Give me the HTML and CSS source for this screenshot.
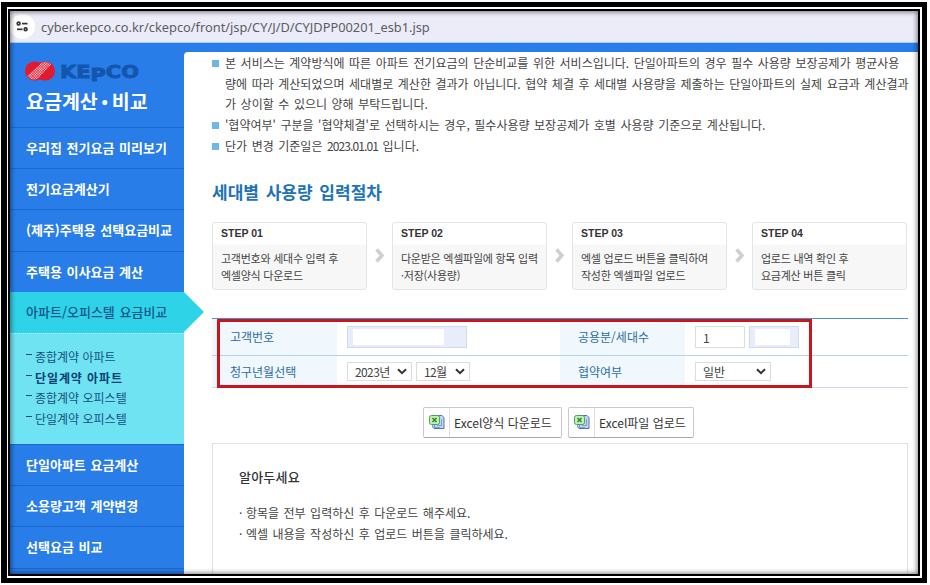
FILE: index.html
```html
<!DOCTYPE html>
<html lang="ko">
<head>
    <meta charset="UTF-8">
    <meta name="viewport" content="width=device-width, initial-scale=1.0">
    <title>요금계산 · 비교</title>
    <link rel="stylesheet" href="styles.css">
</head>
<body>
    <div class="frame">
    <div class="frame-line">
    <div class="window">
        <div class="address-bar">
            <span class="site-info">
                <svg width="13" height="11" viewBox="0 0 13 11" fill="none" stroke="#333" stroke-width="1.7">
                    <circle cx="2.6" cy="2.6" r="1.4"/><path d="M6 2.6h5.5"/>
                    <circle cx="9.6" cy="8.3" r="1.4"/><path d="M1 8.3h5.5"/>
                </svg>
            </span>
            <span class="url">cyber.kepco.co.kr/ckepco/front/jsp/CY/J/D/CYJDPP00201_esb1.jsp</span>
        </div>
        <div class="page">
            <div class="sidebar">
                <div class="brand">
                    <svg class="logo" width="118" height="24" viewBox="0 0 118 24">
                        <defs>
                            <pattern id="dots" width="1.8" height="1.8" patternUnits="userSpaceOnUse" patternTransform="rotate(45)">
                                <rect width="1.1" height="1.1" fill="#fff"/>
                            </pattern>
                        </defs>
                        <rect x="1" y="1.500" width="20" height="19" rx="9.500" fill="#e2192f"/>
                        <rect x="11" y="1.500" width="20" height="19" rx="9.500" fill="#e2192f"/>
                        <path d="M3 16L18 2.500q6-2 9 2L14 18.500q-6 3-11-2.500z" fill="url(#dots)"/>
                        <text x="36" y="18" textLength="79" lengthAdjust="spacingAndGlyphs">KE<tspan dy="3">P</tspan><tspan dy="-3">C</tspan>O</text>
                    </svg>
                    <div class="brand-title">요금계산<span>•</span>비교</div>
                </div>
                <ul class="menu">
                    <li>우리집 전기요금 미리보기</li>
                    <li>전기요금계산기</li>
                    <li>(제주)주택용 선택요금비교</li>
                    <li>주택용 이사요금 계산</li>
                    <li class="active">아파트/오피스텔 요금비교</li>
                </ul>
                <ul class="submenu">
                    <li>종합계약 아파트</li>
                    <li class="current">단일계약 아파트</li>
                    <li>종합계약 오피스텔</li>
                    <li>단일계약 오피스텔</li>
                </ul>
                <ul class="menu">
                    <li>단일아파트 요금계산</li>
                    <li>소용량고객 계약변경</li>
                    <li>선택요금 비교</li>
                    <li></li>
                </ul>
            </div>
            <div class="content">
                <ul class="notice">
                    <li>본 서비스는 계약방식에 따른 아파트 전기요금의 단순비교를 위한 서비스입니다. 단일아파트의 경우 필수 사용량 보장공제가 평균사용<br>량에 따라 계산되었으며 세대별로 계산한 결과가 아닙니다. 협약 체결 후 세대별 사용량을 제출하는 단일아파트의 실제 요금과 계산결과<br>가 상이할 수 있으니 양해 부탁드립니다.</li>
                    <li>'협약여부' 구분을 '협약체결'로 선택하시는 경우, 필수사용량 보장공제가 호별 사용량 기준으로 계산됩니다.</li>
                    <li>단가 변경 기준일은 <span class="date">2023.01.01</span> 입니다.</li>
                </ul>
                <h1>세대별 사용량 입력절차</h1>
                <div class="steps">
                    <div class="step">
                        <h2>STEP 01</h2>
                        <p>고객번호와 세대수 입력 후<br>엑셀양식 다운로드</p>
                    </div>
                    <svg class="arrow" width="10" height="15" viewBox="0 0 10 15"><path d="M1.5 1.5L7 7.5l-5.5 6"/></svg>
                    <div class="step">
                        <h2>STEP 02</h2>
                        <p>다운받은 엑셀파일에 항목 입력<br>·저장(사용량)</p>
                    </div>
                    <svg class="arrow" width="10" height="15" viewBox="0 0 10 15"><path d="M1.5 1.5L7 7.5l-5.5 6"/></svg>
                    <div class="step">
                        <h2>STEP 03</h2>
                        <p>엑셀 업로드 버튼을 클릭하여<br>작성한 엑셀파일 업로드</p>
                    </div>
                    <svg class="arrow" width="10" height="15" viewBox="0 0 10 15"><path d="M1.5 1.5L7 7.5l-5.5 6"/></svg>
                    <div class="step">
                        <h2>STEP 04</h2>
                        <p>업로드 내역 확인 후<br>요금계산 버튼 클릭</p>
                    </div>
                </div>
                <div class="form">
                    <div class="row">
                        <label>고객번호</label>
                        <div class="field"><div class="box filled customer"><i></i></div></div>
                        <label>공용분/세대수</label>
                        <div class="field"><div class="box">1</div><div class="box filled"><i></i></div></div>
                    </div>
                    <div class="row">
                        <label>청구년월선택</label>
                        <div class="field">
                            <div class="select year">2023년<svg width="10" height="7" viewBox="0 0 10 7"><path d="M1 1.2l4 4 4-4"/></svg></div>
                            <div class="select month">12월<svg width="10" height="7" viewBox="0 0 10 7"><path d="M1 1.2l4 4 4-4"/></svg></div>
                        </div>
                        <label>협약여부</label>
                        <div class="field">
                            <div class="select type">일반<svg width="10" height="7" viewBox="0 0 10 7"><path d="M1 1.2l4 4 4-4"/></svg></div>
                        </div>
                    </div>
                    <div class="highlight"></div>
                </div>
                <div class="buttons">
                    <div class="btn download">
                        <span class="icon"><svg width="16" height="16" viewBox="0 0 16 16">
                            <path d="M6 1.5h7l2 2v11H5z" fill="#c3d5f5" stroke="#5573b3"/>
                            <path d="M3.5 10v3.500H11M12.500 5v7M8 11.500h5" fill="none" stroke="#7f9fd8"/>
                            <rect x=".5" y="1.5" width="10" height="9" rx="2" fill="#c5ecbb" stroke="#4aa548"/>
                            <path d="M3.500 4l4 4M7.500 4l-4 4" stroke="#23882b" stroke-width="1.5"/>
                        </svg></span>
                        <span class="text">Excel양식 다운로드</span>
                    </div>
                    <div class="btn upload">
                        <span class="icon"><svg width="16" height="16" viewBox="0 0 16 16">
                            <path d="M6 1.5h7l2 2v11H5z" fill="#c3d5f5" stroke="#5573b3"/>
                            <path d="M3.5 10v3.500H11M12.500 5v7M8 11.500h5" fill="none" stroke="#7f9fd8"/>
                            <rect x=".5" y="1.5" width="10" height="9" rx="2" fill="#c5ecbb" stroke="#4aa548"/>
                            <path d="M3.500 4l4 4M7.500 4l-4 4" stroke="#23882b" stroke-width="1.5"/>
                        </svg></span>
                        <span class="text">Excel파일 업로드</span>
                    </div>
                </div>
                <div class="info">
                    <h3>알아두세요</h3>
                    <ul>
                        <li>항목을 전부 입력하신 후 다운로드 해주세요.</li>
                        <li>엑셀 내용을 작성하신 후 업로드 버튼을 클릭하세요.</li>
                    </ul>
                </div>
            </div>
        </div>
    </div>
    </div>
    </div>
</body>
</html>
```
FILE: styles.css
```css
* {
    box-sizing: border-box;
}
body {
    margin: 0;
    padding: 2px 3px 2px 1px;
    height: 585px;
    overflow: hidden;
    background: #fff;
    font-family: "Noto Sans CJK KR", sans-serif;
    font-size: 12px;
    color: #444;
}
ul, h1, h2, h3, p {
    margin: 0;
    padding: 0;
    list-style: none;
}
/* picture frame */
.frame {
    height: 581px;
    padding: 5px 5px 5px 6px;
    background: #000;
}
.frame-line {
    height: 571px;
    border: 1px solid #fff;
    border-width: 2px 2px 2px 1px;
    padding: 2px;
    background: #000;
}
.window {
    position: relative;
    height: 563px;
    overflow: hidden;
    background: #287de9;
}
.window::after {
    content: "";
    position: absolute;
    inset: 0;
    box-shadow: inset 0 0 5px 1px rgba(0, 0, 0, 0.5);
}
.address-bar {
    display: flex;
    align-items: center;
    height: 32px;
    background: #ebecf8;
    border-bottom: 1px solid #a9cdf5;
}
.site-info {
    display: flex;
    align-items: center;
    justify-content: center;
    width: 25px;
    height: 25px;
    margin-right: 6px;
    border-radius: 50%;
    background: #fff;
}
.url {
    font-family: "Noto Sans", sans-serif;
    font-size: 12.8px;
    color: #5a5c63;
    white-space: nowrap;
}
.page {
    display: flex;
    height: 531px;
}
.sidebar {
    width: 174px;
    flex: none;
    color: #fff;
}
.brand {
    height: 84px;
    padding: 17px 0 0 14px;
}
.logo {
    display: block;
}
.logo text {
    font: bold 18px "DejaVu Sans", sans-serif;
    fill: #1456ad;
    stroke: #1456ad;
    stroke-width: 0.9;
}
.brand-title {
    display: flex;
    padding-left: 2px;
    font-size: 19.5px;
    font-weight: 700;
    line-height: 34px;
}
.brand-title span {
    width: 14px;
    text-align: center;
    font-size: 17px;
}
.menu li {
    height: 41.2px;
    padding-left: 16px;
    border-top: 1px solid #1c68cd;
    font-size: 13px;
    font-weight: 700;
    line-height: 40px;
    word-spacing: 1px;
    white-space: nowrap;
}
.menu .active {
    position: relative;
    border-top: 0;
    background: #2fd3e8;
    color: #14558c;
    font-weight: 500;
}
.menu .active::after {
    content: "";
    position: absolute;
    left: 174px;
    top: 0;
    border: solid transparent;
    border-width: 20.5px 0 20.5px 20px;
    border-left-color: #2fd3e8;
}
.submenu {
    height: 111px;
    padding: 13px 0 0 15px;
    border-top: 1px dotted #b5f2f9;
    background: #70e3f2;
    color: #14507e;
    line-height: 20.6px;
}
.submenu li {
    display: flex;
}
.submenu li::before {
    content: "";
    width: 6px;
    height: 1px;
    margin: 7px 3px 0 1px;
    background: #14507e;
}
.submenu .current {
    font-weight: 700;
    letter-spacing: 0.9px;
    color: #0b3f73;
}
.content {
    flex: 1;
    margin-top: 9px;
    padding: 1px 10px 0 28px;
    border-top-left-radius: 4px;
    background: #fff;
}
.notice {
    line-height: 20.7px;
    word-spacing: 1.2px;
    white-space: nowrap;
}
.notice li {
    position: relative;
    padding-left: 13px;
}
.notice li::before {
    content: "";
    position: absolute;
    left: 0;
    top: 7px;
    width: 7px;
    height: 7px;
    background: #6db8e2;
}
.notice .date {
    letter-spacing: -0.9px;
}
h1 {
    height: 65px;
    padding-top: 22px;
    font-size: 17px;
    font-weight: 700;
    line-height: 26px;
    word-spacing: 2px;
    color: #2173b5;
}
.steps {
    display: flex;
    align-items: center;
    justify-content: space-between;
    width: 695px;
}
.step {
    width: 155px;
    height: 68px;
    padding-left: 8px;
    border: 1px solid #dfe5e8;
    border-radius: 3px;
    background: linear-gradient(#fff 21px, #f7f7f7 22px);
    color: #444;
}
.step h2 {
    height: 27px;
    font: bold 10.5px/21px "Liberation Sans", sans-serif;
    color: #333;
}
.step p {
    font-size: 11px;
    line-height: 17px;
    letter-spacing: -0.25px;
    white-space: nowrap;
}
.arrow path {
    fill: none;
    stroke: #cfcfcf;
    stroke-width: 3.5;
}
.form {
    position: relative;
    width: 696px;
    height: 70px;
    margin-top: 28px;
    border-top: 1px solid #4e8fc6;
}
.row {
    display: grid;
    grid-template-columns: 125px 223px 125px 223px;
    height: 37px;
    border-bottom: 1px solid #b4d2ea;
}
.row + .row {
    height: 32px;
    border-bottom-color: #cfdbe8;
}
.row label {
    display: flex;
    align-items: center;
    padding-left: 18px;
    background: #f0f8fe;
    color: #2d6c9f;
}
.field {
    display: flex;
    align-items: center;
    gap: 4px;
    padding-left: 10px;
}
.box {
    width: 50px;
    height: 22px;
    padding-left: 7px;
    border: 1px solid #dcdcdc;
    background: #fff;
    line-height: 22px;
}
.box.filled {
    padding: 2px 8px 2px 5px;
    border-color: #d3d9e8;
    background: #e7edfa;
}
.box i {
    display: block;
    height: 16px;
    background: #fff;
}
.box.customer {
    width: 120px;
    padding-right: 22px;
}
.select {
    display: flex;
    align-items: center;
    justify-content: space-between;
    width: 76px;
    height: 19px;
    padding: 0 4px 0 7px;
    border: 1px solid #dcdcdc;
    white-space: nowrap;
}
.select.year {
    width: 65px;
    letter-spacing: -0.6px;
}
.select.month {
    width: 54px;
    letter-spacing: -0.6px;
}
.select path {
    fill: none;
    stroke: #333;
    stroke-width: 2;
}
.highlight {
    position: absolute;
    left: 5px;
    top: 0;
    width: 595px;
    height: 69px;
    border: 3px solid #c8161d;
}
.buttons {
    display: flex;
    gap: 6px;
    margin: 19px 0 5px 211px;
}
.btn {
    display: flex;
    height: 31px;
    border: 1px solid #c9c9c9;
    border-bottom-color: #aaa;
    border-radius: 2px;
    background: #fff;
    line-height: 29px;
    color: #333;
    white-space: nowrap;
}
.btn.download {
    width: 139px;
}
.btn.upload {
    width: 126px;
}
.btn .icon {
    display: flex;
    align-items: center;
    justify-content: center;
    width: 26px;
    border-right: 1px solid #ddd;
}
.btn .text {
    padding-left: 4px;
}
.info {
    width: 696px;
    height: 150px;
    padding: 21px 26px;
    border: 1px solid #e2e2e2;
}
.info h3 {
    font-size: 13px;
    font-weight: 500;
    line-height: 24px;
    letter-spacing: 0.2px;
    color: #333;
}
.info ul {
    padding-top: 13px;
    line-height: 21px;
    word-spacing: 1.1px;
}
.info li {
    display: flex;
}
.info li::before {
    content: "·";
    width: 7px;
}
```
